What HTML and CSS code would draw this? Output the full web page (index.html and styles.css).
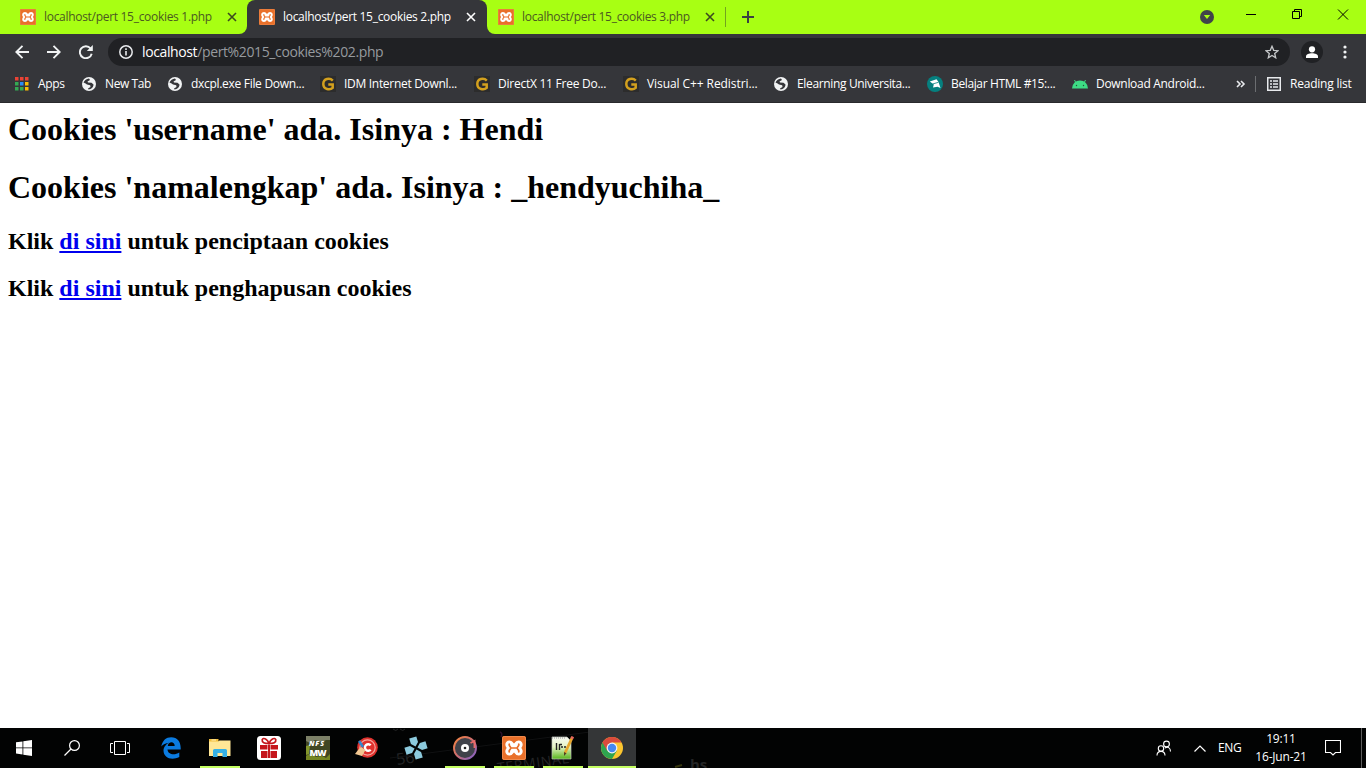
FILE: index.html
```html
<!DOCTYPE html>
<html lang="id">
<head>
<meta charset="utf-8">
<title>localhost/pert 15_cookies 2.php</title>
<link rel="stylesheet" href="styles.css">
</head>
<body>
<svg class="defs" width="0" height="0">
  <defs>
    <linearGradient id="groove" x1="0" y1="0" x2="1" y2="1"><stop offset="0" stop-color="#f5853f"/><stop offset=".5" stop-color="#cc6d72"/><stop offset="1" stop-color="#7a60d0"/></linearGradient>
    <linearGradient id="leaf" x1="0" y1="0" x2="0" y2="1"><stop offset="0" stop-color="#f8faf4"/><stop offset=".45" stop-color="#e6f4c4"/><stop offset="1" stop-color="#57b51c"/></linearGradient>
  </defs>
  <symbol id="xampp" viewBox="0 0 24 24">
    <rect width="24" height="24" rx="2" fill="#e9702a"/>
    <rect x=".5" y=".5" width="23" height="23" rx="2" fill="none" stroke="#f08a4c"/>
    <path d="M7.500 4.500Q10 4.500 12 7.500Q14 4.500 16.500 4.500C20.500 4.500 22 9 19.300 12C22 15 20.500 19.500 16.500 19.500Q14 19.500 12 16.500Q10 19.500 7.500 19.500C3.500 19.500 2 15 4.700 12C2 9 3.500 4.500 7.500 4.500Z" fill="#fff"/>
    <path d="M7.300 8.200C6.500 10 8.800 10.300 8.800 12S6.500 14 7.300 15.800M16.700 8.200C17.500 10 15.200 10.300 15.200 12S17.500 14 16.700 15.800M9 12H15" fill="none" stroke="#e9702a" stroke-width="1.700" stroke-linecap="round"/>
  </symbol>
  <symbol id="close" viewBox="0 0 10 10"><path d="M1 1L9 9M9 1L1 9" fill="none" stroke="currentColor" stroke-width="1.600"/></symbol>
  <symbol id="globe" viewBox="0 0 14 14">
    <circle cx="7" cy="7" r="7" fill="#f1f3f4"/>
    <path d="M1.500 5.500C2.500 3.300 4.500 1.700 7 1.500L8 3L5.500 4.600L6 5.500L9.500 5.800L11.500 7.500C11.500 10 9.500 12.300 6.500 12.500L6 11.600L8.500 10L8.200 8.300L5 7.600L3.600 6.500Z" fill="#35363a"/>
  </symbol>
  <symbol id="goldg" viewBox="0 0 16 16">
    <rect width="16" height="16" fill="#2c2c2c"/>
    <path d="M12.800 4.600C9.800 1.600 3.300 2.400 3.300 8S10 14.300 12.700 11.800V8.500H8.300" fill="none" stroke="#d3a01e" stroke-width="2.500"/>
  </symbol>
</svg>

<header class="browser">
  <div class="tabstrip">
    <div class="tab first"><svg class="i16"><use href="#xampp"/></svg><span class="title">localhost/pert 15_cookies 1.php</span><svg class="x"><use href="#close"/></svg></div>
    <div class="tab active"><svg class="i16"><use href="#xampp"/></svg><span class="title">localhost/pert 15_cookies 2.php</span><svg class="x"><use href="#close"/></svg></div>
    <div class="tab last"><svg class="i16"><use href="#xampp"/></svg><span class="title">localhost/pert 15_cookies 3.php</span><svg class="x"><use href="#close"/></svg></div>
    <svg class="plus" width="12" height="12"><path d="M6 0V12M0 6H12" stroke="#3c4043" stroke-width="2"/></svg>
    <svg class="winctl" width="166" height="34">
      <circle cx="7" cy="17" r="7" fill="#40444a"/><path d="M3.800 15H10.200L7 19Z" fill="#a8ff13"/>
      <path d="M46 14.500H56" stroke="#000"/>
      <path d="M92.500 11.500H99.500V18.500H92.500ZM94.500 11V9.500H101.500V16.500H100" fill="none" stroke="#000"/>
      <path d="M138 9.500L148 19.500M148 9.500L138 19.500" stroke="#000"/>
    </svg>
  </div>

  <div class="toolbar">
    <div class="nav">
      <svg width="14" height="14"><path d="M14 7H1.500M7.500 .8L1.300 7L7.500 13.200" fill="none" stroke="#f1f3f4" stroke-width="1.900"/></svg>
      <svg width="14" height="14"><path d="M0 7H12.500M6.500 .8L12.700 7L6.500 13.200" fill="none" stroke="#f1f3f4" stroke-width="1.900"/></svg>
      <svg width="14" height="14"><path d="M11.600 3.500A6 6 0 1 0 12.700 8.700" fill="none" stroke="#f1f3f4" stroke-width="1.900"/><path d="M13.800 0V6H7.800Z" fill="#f1f3f4"/></svg>
    </div>
    <div class="omnibox">
      <svg width="14" height="14"><circle cx="7" cy="7" r="6.200" fill="none" stroke="#e8eaed" stroke-width="1.500"/><path d="M7 6V10.500M7 3.300V5" stroke="#e8eaed" stroke-width="1.600"/></svg>
      <span class="url"><b>localhost</b>/pert%2015_cookies%202.php</span>
      <svg class="star" width="14" height="14"><path d="M7 1.300L8.700 5.300L13 5.700L9.700 8.500L10.700 12.800L7 10.500L3.300 12.800L4.300 8.500L1 5.700L5.300 5.300Z" fill="none" stroke="#c6c8ca" stroke-width="1.300"/></svg>
    </div>
    <svg class="profile" width="22" height="22"><circle cx="11" cy="11" r="11" fill="#202124"/><circle cx="11" cy="8.300" r="3.100" fill="#fff"/><path d="M5 17V15.500C5 13.300 8 12.300 11 12.300S17 13.300 17 15.500V17Z" fill="#fff"/></svg>
    <svg class="more" width="4" height="14"><circle cx="2" cy="2" r="1.600" fill="#f1f3f4"/><circle cx="2" cy="7" r="1.600" fill="#f1f3f4"/><circle cx="2" cy="12" r="1.600" fill="#f1f3f4"/></svg>
  </div>

  <nav class="bookmarks">
    <div class="bm b0"><svg class="i14"><g fill="#ea4335"><path d="M0 0H3.500V3.500H0ZM5 0H8.500V3.500H5ZM10 0H13.500V3.500H10Z"/></g><path d="M0 5H3.500V8.500H0ZM0 10H3.500V13.500H0ZM5 10H8.500V13.500H5Z" fill="#34a853"/><path d="M5 5H8.500V8.500H5Z" fill="#2a8cf5"/><path d="M10 5H13.500V8.500H10ZM10 10H13.500V13.500H10Z" fill="#fbbc04"/></svg><span>Apps</span></div>
    <div class="bm b1"><svg class="i14"><use href="#globe"/></svg><span>New Tab</span></div>
    <div class="bm b2"><svg class="i14"><use href="#globe"/></svg><span>dxcpl.exe File Down...</span></div>
    <div class="bm b3"><svg class="i16"><use href="#goldg"/></svg><span>IDM Internet Downl...</span></div>
    <div class="bm b4"><svg class="i16"><use href="#goldg"/></svg><span>DirectX 11 Free Do...</span></div>
    <div class="bm b5"><svg class="i16"><use href="#goldg"/></svg><span>Visual C++ Redistri...</span></div>
    <div class="bm b6"><svg class="i14"><use href="#globe"/></svg><span>Elearning Universita...</span></div>
    <div class="bm b7"><svg class="i16"><circle cx="8" cy="8" r="8" fill="#05807f"/><path d="M2.800 5.500L9.500 3.300L11.500 6L13.500 12L10.500 10.800L6 11.500L6.800 8.500Z" fill="#fff"/><path d="M5.500 8L11.500 6.300" stroke="#05807f" stroke-width=".8"/></svg><span>Belajar HTML #15:...</span></div>
    <div class="bm b8"><svg class="i16"><path d="M0 12.500A8 8 0 0 1 16 12.500Z" fill="#3ddc84"/><path d="M4 7L2.500 4M12 7L13.500 4" stroke="#3ddc84"/><circle cx="4.500" cy="9.500" r=".7" fill="#24523a"/><circle cx="11.500" cy="9.500" r=".7" fill="#24523a"/></svg><span>Download Android...</span></div>
    <svg class="chev" width="10" height="8"><path d="M1 1L4 4L1 7M5 1L8 4L5 7" fill="none" stroke="#e8eaed" stroke-width="1.600"/></svg>
    <div class="reading"><svg class="i14"><rect x=".75" y=".75" width="12.500" height="12.500" fill="none" stroke="#e8eaed" stroke-width="1.500"/><path d="M3 4H5M3 7H5M3 10H5M6 4H11M6 7H11M6 10H11" stroke="#e8eaed" stroke-width="1.500"/></svg><span>Reading list</span></div>
  </nav>
</header>

<main class="page">
  <h1>Cookies 'username' ada. Isinya : Hendi</h1>
  <h1>Cookies 'namalengkap' ada. Isinya : _hendyuchiha_</h1>
  <h2>Klik <a href="#">di sini</a> untuk penciptaan cookies</h2>
  <h2>Klik <a href="#">di sini</a> untuk penghapusan cookies</h2>
</main>

<footer class="taskbar">
  <svg class="wallpaper" width="760" height="40">
    <text x="397" y="37" font-size="16" transform="rotate(-8 397 37)">56</text>
    <text x="498" y="45" font-size="14" textLength="72" transform="rotate(-8 498 45)">TERMINAL</text>
    <text x="690" y="42" font-size="15" font-weight="700">hs</text>
    <path d="M393 1q3 3 5 0M400 1q3 3 5 0" fill="none" stroke="#242526"/>
    <path d="M390 30L590 4" stroke="#101112"/>
    <path d="M500 4q3 1 1 5" stroke="#2a1028" stroke-width="1.500" fill="none"/>
    <path d="M675 39L682 37" stroke="#35350d" stroke-width="2"/>
  </svg>
  <div class="app sys"><svg width="16" height="16"><path d="M0 2.300L6.500 1.400V7.500H0ZM7.300 1.300L16 0V7.500H7.300ZM0 8.300H6.500V14.500L0 13.600ZM7.300 8.300H16V16L7.300 14.700Z" fill="#fff"/></svg></div>
  <div class="app sys"><svg width="16" height="16"><circle cx="10.500" cy="5.500" r="4.900" fill="none" stroke="#fff" stroke-width="1.200"/><path d="M7 9L.5 15.500" stroke="#fff" stroke-width="1.300"/></svg></div>
  <div class="app taskview"><svg width="20" height="14"><path d="M4.500 .5H15.500V13.500H4.500ZM3 2.500H.5V11.500H3M17 2.500H19.500V11.500H17" fill="none" stroke="#fff"/></svg></div>
  <div class="app"><svg width="20" height="22" viewBox="0 0 20 22"><path d="M.3 9.500C1.500 3.500 5 .3 10.200 .3C16.500 .3 20 4.800 19.700 12.500H6.500C6.800 17.500 13.500 18.700 18.300 15.500V20C10.500 24 2.500 20.700 2.500 13.500C2.500 9.800 5.500 6.700 8 5.700C4.700 6 2 7.400 .3 9.500ZM6.800 8.900H13.700C13.600 3.900 7.300 4.200 6.800 8.900Z" fill="#0b7be0"/></svg></div>
  <div class="app run"><svg width="22" height="18"><path d="M0 0H9.500V3H0Z" fill="#f3bf3d"/><path d="M2.500 1H7" stroke="#fff2c0"/><path d="M0 2.500H9L10.500 1.500H21.500V17H0Z" fill="#ffe796"/><path d="M4 18V11.500Q4 10 5.500 10H16.500Q18 10 18 11.500V18H13.500V14H8.500V18Z" fill="#35b1e6"/></svg></div>
  <div class="app"><svg width="24" height="24"><rect width="24" height="24" rx="3.500" fill="#fff"/><path d="M3 9H10.500V13.500H3ZM13.500 9H21V13.500H13.500ZM4 15H10.500V22H4ZM13.500 15H20V22H13.500ZM11 9H13V22H11Z" fill="#c5161c"/><path d="M12 7.500C7.500 7.500 4.700 6.500 5.200 3.700C6.500 1 10.500 3 12 7.500C13.500 3 17.500 1 18.800 3.700C19.300 6.500 16.500 7.500 12 7.500Z" fill="none" stroke="#c5161c" stroke-width="1.700"/></svg></div>
  <div class="app"><svg width="24" height="24"><rect width="24" height="24" fill="#414724"/><path d="M0 0H24V4H20L16 6L9 4L4 7L0 5Z" fill="#7c8067"/><path d="M0 20L5 17L10 21L16 20L20 22L24 18V24H0Z" fill="#748522"/><path d="M0 10L4 9L3 18L0 19Z" fill="#83962b"/><text x="3" y="10" class="nfs-a" textLength="15">NFS</text><text x="3.500" y="19.500" class="nfs-b" textLength="17">MW</text></svg></div>
  <div class="app"><svg width="24" height="24"><circle cx="12.500" cy="11.500" r="10.300" fill="#df312d"/><circle cx="12.500" cy="11.500" r="7.700" fill="none" stroke="#f5a59d" stroke-width="1.200"/><path d="M15.700 9.300A3.300 3.300 0 1 0 15.700 13.700" fill="none" stroke="#fff" stroke-width="2.400"/><path d="M4 5L8 11" stroke="#3086ce" stroke-width="2.500"/><path d="M6 11L10.500 14L7 20L0 18L3 14Z" fill="#f1c792"/></svg></div>
  <div class="app"><svg width="24" height="24"><g transform="rotate(-17 12 12)" fill="#8ccadd"><path id="petal" d="M8.300 1H15.700V6.800L12 10.500L8.300 6.800Z"/><use href="#petal" transform="rotate(90 12 12)"/><use href="#petal" transform="rotate(180 12 12)"/><use href="#petal" transform="rotate(270 12 12)"/></g></svg></div>
  <div class="app run"><svg width="24" height="24"><circle cx="12" cy="12" r="11" fill="#40424a" stroke="url(#groove)" stroke-width="1.900"/><path d="M17.500 7L21.500 5V12" stroke="#e96b68" stroke-width="1.900" fill="none"/><circle cx="12" cy="12" r="4" fill="#fff"/><circle cx="12" cy="12" r="1.300" fill="#222"/></svg></div>
  <div class="app run"><svg width="24" height="24"><use href="#xampp"/></svg></div>
  <div class="app run"><svg width="24" height="24"><path d="M1 1H16L20 5V23H1Z" fill="url(#leaf)" stroke="#bfc6ba" stroke-width=".7"/><path d="M1 2H15" stroke="#999" stroke-width="1" stroke-dasharray="1 1"/><path d="M5.500 7V14M8.500 8V14M8.500 8.500H11M10 11H12M13 11H15" stroke="#222" stroke-width="1.400" fill="none"/><path d="M21 2L14 17" stroke="#e8a62c" stroke-width="2.800"/><path d="M20 1L22.500 2.300" stroke="#e5665d" stroke-width="2.500"/><path d="M13 16L15.500 17.200L13 20Z" fill="#54401f"/></svg></div>
  <div class="app run current"><svg width="24" height="24"><circle cx="12" cy="12" r="11" fill="#fbc52f"/><path d="M12 12L2.500 6.500A11 11 0 0 0 12 23L17 14.500Z" fill="#2ea44f"/><path d="M2.470 6.500A11 11 0 0 1 21.530 6.500H12V12L7.200 14.700Z" fill="#da4b3c"/><circle cx="12" cy="12" r="5.400" fill="#f4f4f4"/><circle cx="12" cy="12" r="4.200" fill="#4688f1"/></svg></div>
  <div class="tray">
    <svg width="16" height="16"><circle cx="10.500" cy="4" r="2.900" fill="none" stroke="#fff" stroke-width="1.100"/><circle cx="5" cy="8.500" r="2.700" fill="none" stroke="#fff" stroke-width="1.100"/><path d="M1 15.500C1 10 9 10 9 15.500M9 8.200C11.500 5.800 14.500 8 14.500 11.500" fill="none" stroke="#fff" stroke-width="1.100"/></svg>
    <svg class="up" width="12" height="7"><path d="M.5 6.500L6 1L11.500 6.500" fill="none" stroke="#fff" stroke-width="1.200"/></svg>
    <span class="lang">ENG</span>
    <span class="clock"><span>19:11</span><span>16-Jun-21</span></span>
    <svg class="note" width="16" height="16"><path d="M.5 .5H15.500V12.500H10.500L8 15L5.500 12.500H.5Z" fill="none" stroke="#fff" stroke-width="1.100"/></svg>
  </div>
</footer>
</body>
</html>
```
FILE: styles.css
```css
* { box-sizing: border-box; }
html, body { height: 100%; }
body {
  margin: 0;
  display: flex;
  flex-direction: column;
  overflow: hidden;
  background: #fff;
  font: 12px/16px "Open Sans", "Noto Sans", sans-serif;
}
svg { display: block; flex: none; }
.defs { position: absolute; }
.i16 { width: 16px; height: 16px; }
.i14 { width: 14px; height: 14px; }

/* Browser chrome */
.browser { flex: none; height: 103px; background: #35363a; border-bottom: 1px solid #29292c; color: #fff; }
.tabstrip {
  display: flex;
  align-items: center;
  height: 34px;
  color: #4b5921;
  background: linear-gradient(#a8ff13, #a8ff13) 726px 0 no-repeat, linear-gradient(#a8ff13 50%, #35363a 50%);
}
.tab { display: flex; align-items: center; width: 239px; height: 34px; padding-left: 11px; }
.tab.first { width: 247px; padding-left: 20px; border-bottom-right-radius: 8px; }
.tab.active { width: 240px; padding-left: 12px; background: #35363a; color: #fff; border-radius: 8px 8px 0 0; }
.tab.first, .tab.last { background: #a8ff13; }
.tab.last { border-bottom-left-radius: 8px; position: relative; }
.tab.last::after { content: ""; position: absolute; right: 0; top: 7px; width: 1px; height: 20px; background: #72a51e; }
.title { width: 182px; margin-left: 8px; white-space: nowrap; letter-spacing: -.3px; }
.x { width: 10px; height: 10px; margin-left: 1px; color: #3c4a1f; }
.active .x { color: #fff; }
.plus { margin-left: 16px; }
.winctl { margin-left: auto; }

.toolbar { display: flex; align-items: center; height: 36px; }
.nav { display: flex; gap: 18px; width: 108px; padding-left: 15px; }
.omnibox { display: flex; align-items: center; width: 1182px; height: 28px; padding: 0 11px; border-radius: 14px; background: #202124; }
.url { margin-left: 9px; font-size: 14px; letter-spacing: -.38px; color: #969a9e; white-space: nowrap; }
.url b { font-weight: 400; color: #fff; }
.star { margin-left: auto; }
.profile { margin-left: 11px; }
.more { margin-left: 20px; }

.bookmarks { display: flex; align-items: center; height: 28px; padding-left: 15px; }
.bm, .reading { display: flex; align-items: center; white-space: nowrap; letter-spacing: -.3px; }
.bm span { margin-left: 9px; }
.bm .i16 + span { margin-left: 8px; }
.b0 { width: 67px; }
.b1 { width: 86px; }
.b2 { width: 152px; }
.b3 { width: 154px; }
.b4 { width: 149px; letter-spacing: -.25px; }
.b5 { width: 151px; letter-spacing: -.08px; }
.b6 { width: 153px; letter-spacing: -.35px; }
.b7 { width: 145px; letter-spacing: -.37px; }
.b8 { width: 164px; }
.bookmarks .b1 { letter-spacing: -.4px; }
.chev { width: 10px; }
.reading { height: 16px; margin-left: 9px; padding-left: 11px; border-left: 1px solid #6c6e71; letter-spacing: -.22px; }
.reading span { margin-left: 9px; }

/* Document */
.page { flex: 1; padding: 8px; color: #000; font-family: "Liberation Serif", serif; }
.page h1 { margin: 0 0 21px; font-size: 32px; line-height: 37px; }
.page h1 + h1 { margin-bottom: 22px; }
.page h2 { margin: 0 0 20px; font-size: 24px; line-height: 27px; }
.page a { color: #0000ee; }

/* Taskbar */
.taskbar { flex: none; display: flex; position: relative; height: 40px; overflow: hidden; background: #020303; color: #fff; }
.wallpaper { position: absolute; left: 0; top: 0; fill: #242526; font-family: "Open Sans", sans-serif; }
.app { display: flex; position: relative; align-items: center; justify-content: center; flex: none; width: 48px; height: 40px; margin-right: 1px; }
.app.sys { margin-right: 0; }
.app.taskview { margin-right: 3px; }
.run { background: linear-gradient(#c4ff62, #c4ff62) 50% 100% / 40px 2px no-repeat; }
.run.current { background: linear-gradient(#c4ff62, #c4ff62) 0 100% / 48px 2px no-repeat #343637; }
.nfs-a { font: italic 900 7px "Open Sans", sans-serif; fill: #fff; }
.nfs-b { font: 800 9px "Open Sans", sans-serif; fill: #fff; }
.tray { display: flex; align-items: center; flex: none; width: 232px; margin-left: auto; margin-right: 4px; padding-left: 26px; border-right: 1px solid #5c5c5c; }
.up { margin-left: 22px; }
.lang { width: 24px; margin-left: 12px; letter-spacing: -.4px; }
.clock { display: flex; flex-direction: column; align-items: center; width: 54px; margin-left: 12px; line-height: 18px; letter-spacing: -.2px; white-space: nowrap; }
.note { margin-left: 17px; }
```
